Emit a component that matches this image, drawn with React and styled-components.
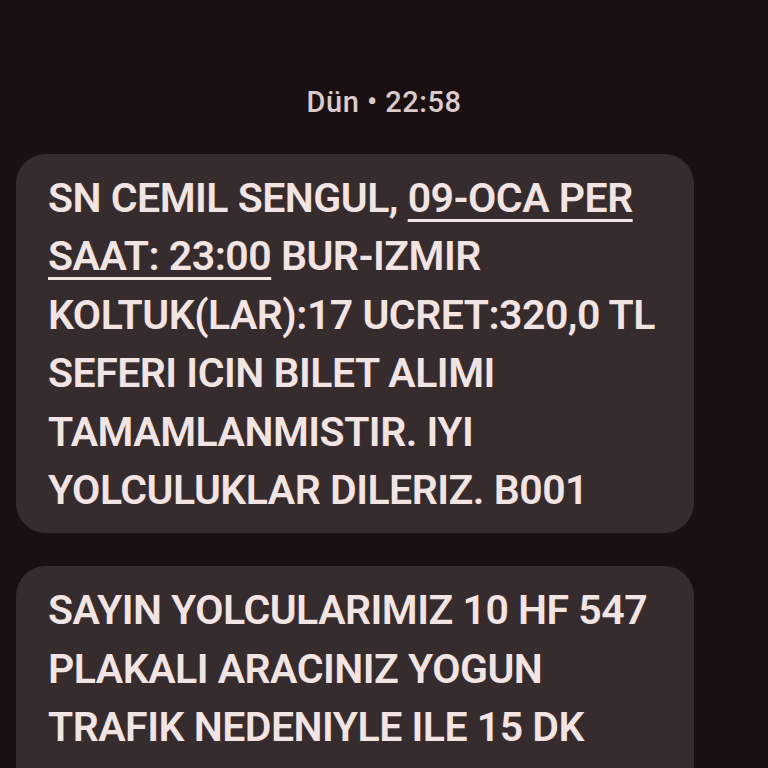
import React from 'react';
import styled, { createGlobalStyle } from 'styled-components';

const Global = createGlobalStyle`
  html, body {
    margin: 0;
    padding: 0;
    background: #1b1011;
  }
  body {
    width: 768px;
    height: 768px;
    overflow: hidden;
    font-family: Roboto, "Noto Sans", "Liberation Sans", sans-serif;
  }
`;

const Screen = styled.div`
  display: flex;
  flex-direction: column;
  align-items: flex-start;
  padding: 84px 74px 0 16px;
  height: 768px;
  box-sizing: border-box;
  background: #1b1011;
`;

const Stamp = styled.div`
  align-self: stretch;
  text-align: center;
  padding-left: 58px;
  color: #dccbcb;
  font-size: 29px;
  font-weight: 500;
  line-height: 36px;
  letter-spacing: 0.5px;
  margin-bottom: 34px;
`;

const Bubble = styled.div`
  width: 678px;
  box-sizing: border-box;
  background: #362c2d;
  border-radius: 30px;
  padding: 15px 26px 14px 32px;
  margin-bottom: 33px;
  color: #f3e4e4;
  font-size: 41px;
  font-weight: 600;
  line-height: 58.4px;
  letter-spacing: -0.5px;
`;

const Link = styled.span`
  text-decoration: underline;
  text-decoration-thickness: 3px;
  text-underline-offset: 7px;
`;

export default function App() {
  return (
    <>
      <Global />
      <Screen>
        <Stamp>Dün • 22:58</Stamp>
        <Bubble>
          SN CEMIL SENGUL, <Link>09-OCA PER SAAT: 23:00</Link> BUR-IZMIR
          KOLTUK(LAR):17 UCRET:320,0 TL SEFERI ICIN BILET ALIMI
          TAMAMLANMISTIR. IYI YOLCULUKLAR DILERIZ. B001
        </Bubble>
        <Bubble>
          SAYIN YOLCULARIMIZ 10 HF 547 PLAKALI ARACINIZ YOGUN TRAFIK
          NEDENIYLE ILE 15 DK GECIKMELI OLARAK HAREKET EDECEKTIR.
        </Bubble>
      </Screen>
    </>
  );
}
